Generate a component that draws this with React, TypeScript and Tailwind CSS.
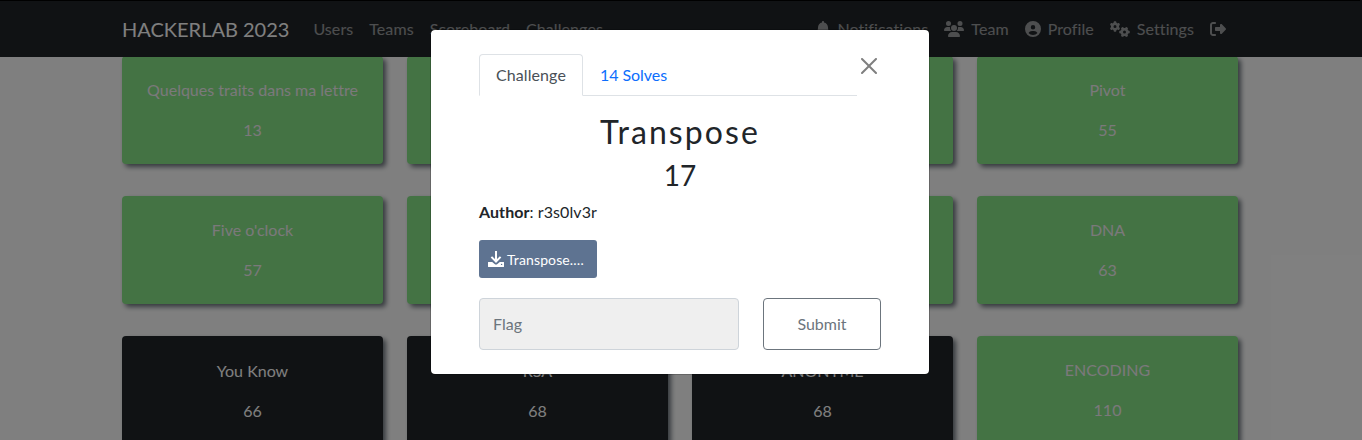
import type { ReactNode } from "react";
import { FaBell, FaCircleUser, FaGears, FaRightFromBracket, FaUsers } from "react-icons/fa6";

type Challenge = { id: number; name?: string; points?: number; solved: boolean };

const challenges: Challenge[] = [
  { id: 1, name: "Quelques traits dans ma lettre", points: 13, solved: true },
  { id: 2, solved: true },
  { id: 3, solved: true },
  { id: 4, name: "Pivot", points: 55, solved: true },
  { id: 5, name: "Five o'clock", points: 57, solved: true },
  { id: 6, solved: true },
  { id: 7, solved: true },
  { id: 8, name: "DNA", points: 63, solved: true },
  { id: 9, name: "You Know", points: 66, solved: false },
  { id: 10, name: "RSA", points: 68, solved: false },
  { id: 11, name: "ANONYME", points: 68, solved: false },
  { id: 12, name: "ENCODING", points: 110, solved: true },
];

function DownloadIcon() {
  return (
    <svg viewBox="0 0 16 16" className="mr-[3px] size-4" fill="none">
      <path d="M0.3 11h3.9l3 2.6h1.6l3-2.6h3.9l.3.3v4.4l-.3.3H.3l-.3-.3v-4.4z" fill="currentColor" />
      <path d="M8 0v10M3.4 5.9 8 10.5l4.6-4.6" stroke="currentColor" strokeWidth="2" />
      <circle cx="13.6" cy="13.4" r="0.7" fill="#5e7391" />
    </svg>
  );
}

function NavItem({ icon, label }: { icon?: ReactNode; label?: string }) {
  return (
    <a className="flex items-center px-2 tracking-[0.08px] text-white/55">
      {icon}
      {label && <span className={icon ? "ml-[7px]" : ""}>{label}</span>}
    </a>
  );
}

function Navbar() {
  return (
    <header className="h-[57px] border-t border-black bg-[#212529]">
      <nav className="mx-auto flex h-14 w-[1140px] items-center px-3">
        <a className="mr-4 text-[20px] leading-[30px] text-white">HACKERLAB 2023</a>
        <div className="flex">
          <NavItem label="Users" />
          <NavItem label="Teams" />
          <NavItem label="Scoreboard" />
          <NavItem label="Challenges" />
        </div>
        <div className="ml-auto flex pr-1">
          <NavItem icon={<FaBell className="h-4 w-[14px]" />} label="Notifications" />
          <NavItem icon={<FaUsers className="h-4 w-5" />} label="Team" />
          <NavItem icon={<FaCircleUser className="size-4" />} label="Profile" />
          <NavItem icon={<FaGears className="h-4 w-5" />} label="Settings" />
          <NavItem icon={<FaRightFromBracket className="size-4" />} />
        </div>
      </nav>
    </header>
  );
}

function ChallengeCard({ name, points, solved }: Challenge) {
  return (
    <button
      className={
        solved
          ? "flex h-[108px] flex-col items-center rounded-[4px] bg-[#88e688] pt-[22px] text-[#f6f2f6] shadow-[3px_3px_5px_#6c757d]"
          : "flex h-[109px] flex-col items-center rounded-[4px] bg-[#212529] pt-[23px] text-white shadow-[3px_3px_5px_#6c757d]"
      }
    >
      <span className="mb-4 block leading-6">{name}</span>
      <span className="block leading-6">{points}</span>
    </button>
  );
}

function ChallengeModal() {
  return (
    <div className="absolute inset-0 z-20 flex items-start justify-center bg-black/50 pr-[2px]">
      <div
        role="dialog"
        className="mt-[29px] h-[346px] w-[500px] rounded-[5px] border border-black/20 bg-white bg-clip-padding px-12 pt-6 text-[#212529]"
      >
        <div className="flex">
          <div className="flex h-[42px] w-[378px] border-b border-[#dee2e6]">
            <a className="h-[42px] w-[104px] rounded-t-[4px] border border-b-white border-[#dee2e6] bg-white text-center leading-[40px] tracking-[0.08px] text-[#495057]">
              Challenge
            </a>
            <a className="pl-[17px] leading-[42px] tracking-[-0.05px] text-[#0d6efd]">14 Solves</a>
          </div>
          <button aria-label="Close" className="mt-1 ml-1 size-4">
            <svg viewBox="0 0 16 16" className="size-4 text-black/50" fill="currentColor">
              <path d="M.293.293a1 1 0 0 1 1.414 0L8 6.586 14.293.293a1 1 0 1 1 1.414 1.414L9.414 8l6.293 6.293a1 1 0 0 1-1.414 1.414L8 9.414l-6.293 6.293a1 1 0 0 1-1.414-1.414L6.586 8 .293 1.707a1 1 0 0 1 0-1.414z" />
            </svg>
          </button>
        </div>
        <h2 className="mt-4 text-center text-[32px] leading-[40px] tracking-[2.1px]">Transpose</h2>
        <h3 className="mt-[6px] text-center text-[28px] leading-[34px]">17</h3>
        <p className="mt-2 leading-6 tracking-[0.08px]">
          <strong className="font-bold">Author</strong>: r3s0lv3r
        </p>
        <a className="mt-4 flex h-[38px] w-[118px] items-center rounded-[3px] bg-[#5e7391] pl-[9px] text-[14px] tracking-[0.12px] text-white">
          <DownloadIcon />
          Transpose.…
        </a>
        <div className="mt-5 flex gap-6">
          <input
            placeholder="Flag"
            className="h-[52px] w-[260px] rounded-[4px] border border-[#ced4da] bg-[#efefef] px-[13px] pb-[2px] placeholder:text-[#6c757d]"
          />
          <button className="h-[52px] w-[118px] rounded-[4px] border border-[#6c757d] text-[#6c757d]">
            Submit
          </button>
        </div>
      </div>
    </div>
  );
}

export default function App() {
  return (
    <div className="relative h-[440px] w-[1362px] overflow-hidden bg-white font-['Lato',sans-serif] text-[16px] [font-variant-ligatures:none]">
      <div className="relative z-10 border-r-2 border-[#212529]">
        <Navbar />
      </div>
      <div className="-mt-px pr-[2px]">
        <main className="mx-auto grid w-[1140px] grid-cols-4 items-start gap-x-6 gap-y-8 px-3">
          {challenges.map((c) => (
            <ChallengeCard key={c.id} {...c} />
          ))}
        </main>
      </div>
      <ChallengeModal />
    </div>
  );
}
